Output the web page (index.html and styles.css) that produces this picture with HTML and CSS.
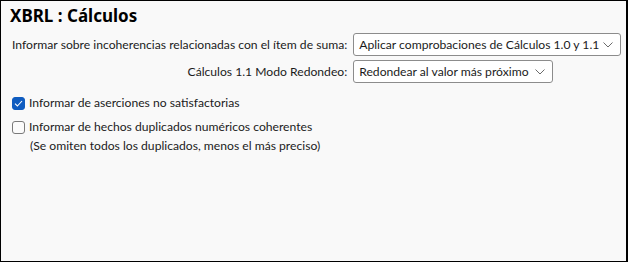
FILE: index.html
```html
<!DOCTYPE html>
<html lang="es">
<head>
<meta charset="utf-8">
<link rel="stylesheet" href="styles.css">
</head>
<body>
<div class="panel">
  <h1 class="title">XBRL : Cálculos</h1>
  <div class="form">
    <span class="label">Informar sobre incoherencias relacionadas con el ítem de suma:</span>
    <div class="select wide">
      <span class="select-text">Aplicar comprobaciones de Cálculos 1.0 y 1.1</span>
      <svg class="chev" width="10" height="6" viewBox="0 0 10 6"><path d="M0.5 0.5 L5 5 L9.5 0.5" fill="none" stroke="#6b6b6b" stroke-width="1"/></svg>
    </div>
    <span class="label">Cálculos 1.1 Modo Redondeo:</span>
    <div class="select narrow">
      <span class="select-text">Redondear al valor más próximo</span>
      <svg class="chev" width="10" height="6" viewBox="0 0 10 6"><path d="M0.5 0.5 L5 5 L9.5 0.5" fill="none" stroke="#6b6b6b" stroke-width="1"/></svg>
    </div>
  </div>
  <div class="checks">
    <div class="check-row">
      <span class="box checked"><svg width="9" height="7" viewBox="0 0 9 7"><path d="M1 3.6 L3.4 6 L8 1" fill="none" stroke="#ffffff" stroke-width="1.1"/></svg></span>
      <span>Informar de aserciones no satisfactorias</span>
    </div>
    <div class="check-row">
      <span class="box"></span>
      <span>Informar de hechos duplicados numéricos coherentes</span>
    </div>
    <div class="note">(Se omiten todos los duplicados, menos el más preciso)</div>
  </div>
</div>
</body>
</html>
```
FILE: styles.css
```css
html, body {
  margin: 0;
  padding: 0;
  background: #ffffff;
}
.panel {
  box-sizing: border-box;
  width: 628px;
  height: 262px;
  border: 1px solid #000;
  border-right-width: 2px;
  background: #f9f9f9;
  font-family: "Lato", "Noto Sans", sans-serif;
  font-size: 12.15px;
  color: #1b1b1b;
  padding: 4px 0 0 9px;
}
.title {
  margin: 0;
  font-family: "Noto Sans", sans-serif;
  font-size: 17px;
  font-weight: 700;
  line-height: 22px;
  color: #000;
}
.form {
  display: grid;
  grid-template-columns: max-content max-content;
  column-gap: 6px;
  row-gap: 4px;
  align-items: center;
  margin-top: 6px;
  margin-left: 2px;
}
.label {
  justify-self: end;
  line-height: 16px;
  white-space: nowrap;
}
.select {
  box-sizing: border-box;
  height: 23px;
  border: 1px solid #8c8c8c;
  border-radius: 3px;
  background: #fff;
  display: flex;
  align-items: center;
  justify-content: space-between;
  padding: 0 7px 0 5px;
  white-space: nowrap;
}
.select.wide { width: 268px; }
.select.narrow { width: 200px; }
.chev { flex: none; }
.checks {
  margin-top: 12px;
  margin-left: 2px;
  display: flex;
  flex-direction: column;
  gap: 8px;
}
.check-row {
  display: flex;
  align-items: center;
  gap: 4px;
  line-height: 16px;
}
.box {
  box-sizing: border-box;
  width: 13px;
  height: 13px;
  border: 1px solid #7a7a7a;
  border-radius: 3px;
  background: #fbfbfb;
  display: flex;
  align-items: center;
  justify-content: center;
}
.box.checked {
  background: #0f5cc0;
  border-color: #0f5cc0;
}
.note {
  margin-left: 18px;
  margin-top: -5px;
  line-height: 16px;
}
```
